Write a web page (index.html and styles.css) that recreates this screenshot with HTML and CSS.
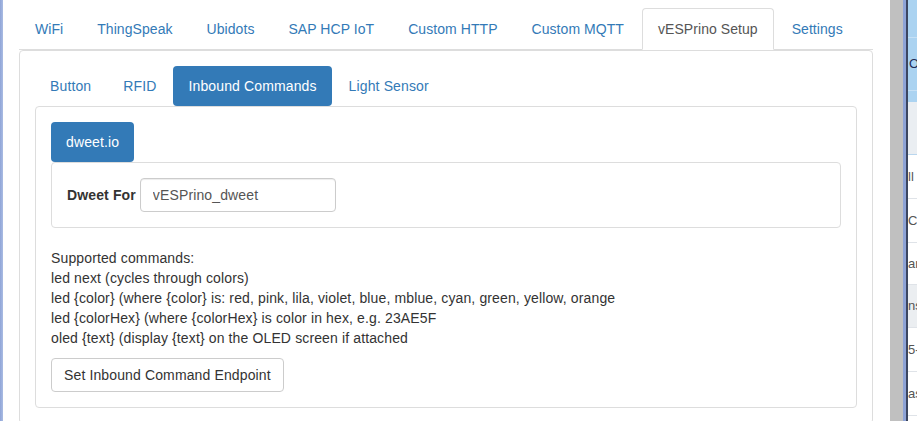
FILE: index.html
```html
<!DOCTYPE html>
<html>
<head>
<meta charset="utf-8">
<link rel="stylesheet" href="styles.css">
</head>
<body>
<div class="screen">
  <div class="edge-left"></div>
  <div class="main">
    <ul class="nav-tabs">
      <li><a>WiFi</a></li>
      <li><a>ThingSpeak</a></li>
      <li><a>Ubidots</a></li>
      <li><a>SAP HCP IoT</a></li>
      <li><a>Custom HTTP</a></li>
      <li><a>Custom MQTT</a></li>
      <li class="active"><a>vESPrino Setup</a></li>
      <li><a>Settings</a></li>
    </ul>
    <div class="tab-panel">
      <ul class="nav-pills">
        <li><a>Button</a></li>
        <li><a>RFID</a></li>
        <li class="active"><a>Inbound Commands</a></li>
        <li><a>Light Sensor</a></li>
      </ul>
      <div class="inner-panel">
        <ul class="nav-pills">
          <li class="active"><a>dweet.io</a></li>
        </ul>
        <div class="field-box">
          <label class="field-label">Dweet For</label>
          <input class="form-control" type="text" value="vESPrino_dweet">
        </div>
        <div class="help">
          <div>Supported commands:</div>
          <div>led next (cycles through colors)</div>
          <div>led {color} (where {color} is: red, pink, lila, violet, blue, mblue, cyan, green, yellow, orange</div>
          <div>led {colorHex} (where {colorHex} is color in hex, e.g. 23AE5F</div>
          <div>oled {text} (display {text} on the OLED screen if attached</div>
        </div>
        <button class="btn">Set Inbound Command Endpoint</button>
      </div>
    </div>
  </div>
  <div class="divider"></div>
  <div class="win-border"></div>
  <div class="win-dark"></div>
  <div class="side-table">
    <div class="st-head1"></div>
    <div class="st-head2"><span class="st-o">O</span></div>
    <div class="st-head3"></div>
    <div class="st-sub"></div>
    <div class="st-row">ll</div>
    <div class="st-row">C</div>
    <div class="st-row short">ar</div>
    <div class="st-row alt">ns</div>
    <div class="st-row">5-</div>
    <div class="st-row">as</div>
    <div class="st-row"></div>
  </div>
</div>
</body>
</html>
```

FILE: styles.css
```css
* { box-sizing: border-box; }
html, body { margin: 0; padding: 0; background: #fff; }
body {
  font-family: "Liberation Sans", Arial, sans-serif;
  font-size: 14px;
  line-height: 20px;
  letter-spacing: 0.13px;
  color: #333;
}
.screen {
  display: flex;
  width: 917px;
  height: 421px;
  overflow: hidden;
}
.edge-left {
  width: 3px;
  flex: none;
  background: linear-gradient(to right, #8fa5d8, #aabce3);
}
.main {
  width: 887px;
  flex: none;
  padding: 8px 17px 0 16px;
}
ul { list-style: none; margin: 0; padding: 0; }
a { text-decoration: none; cursor: pointer; }

.nav-tabs {
  display: flex;
  border-bottom: 1px solid #ddd;
  letter-spacing: 0.06px;
}
.nav-tabs li {
  margin-right: 2px;
  margin-bottom: -1px;
}
.nav-tabs a {
  display: block;
  padding: 10px 15px;
  border: 1px solid transparent;
  border-radius: 4px 4px 0 0;
  color: #337ab7;
  line-height: 20px;
}
.nav-tabs .active a {
  color: #555;
  background: #fff;
  border-color: #ddd;
  border-bottom-color: transparent;
}

.tab-panel {
  border: 1px solid #ddd;
  border-radius: 4px;
  padding: 15px;
}
.nav-pills {
  display: flex;
}
.nav-pills li { margin-right: 2px; }
.nav-pills a {
  display: block;
  padding: 10px 15px;
  border-radius: 4px;
  color: #337ab7;
  line-height: 20px;
}
.nav-pills .active a {
  background: #337ab7;
  color: #fff;
}

.inner-panel {
  border: 1px solid #ddd;
  border-radius: 4px;
  padding: 15px;
}
.field-box {
  display: flex;
  align-items: center;
  gap: 4px;
  border: 1px solid #ddd;
  border-radius: 4px;
  padding: 15px;
  margin-bottom: 20px;
}
.field-label {
  font-weight: bold;
}
.form-control {
  width: 196px;
  height: 34px;
  padding: 6px 12px;
  border: 1px solid #ccc;
  border-radius: 4px;
  box-shadow: inset 0 1px 1px rgba(0,0,0,.075);
  font-family: inherit;
  font-size: 14px;
  line-height: 20px;
  letter-spacing: inherit;
  color: #555;
  background: #fff;
}
.help { margin-bottom: 10px; }
.btn {
  display: block;
  height: 34px;
  padding: 6px 12px;
  border: 1px solid #ccc;
  border-radius: 4px;
  background: #fff;
  color: #333;
  font-family: inherit;
  font-size: 14px;
  line-height: 20px;
  letter-spacing: inherit;
}

.divider {
  width: 13px;
  flex: none;
  background: #c0c0c0;
}
.win-border {
  width: 3px;
  flex: none;
  background: #8ea3d6;
}
.win-dark {
  width: 2px;
  flex: none;
  background: #3c4660;
}
.side-table {
  width: 9px;
  flex: none;
  display: flex;
  flex-direction: column;
  overflow: hidden;
  font-size: 13px;
  letter-spacing: 0;
  color: #555;
  white-space: nowrap;
}
.st-head1 { height: 38px; background: #abd3f1; border-bottom: 1px solid #c6e0f5; flex: none; }
.st-head2 { height: 53px; background: #abd3f1; border-bottom: 1px solid #c6e0f5; flex: none; display: flex; align-items: center; }
.st-o { color: #1d2b55; padding-left: 1px; }
.st-head3 { height: 11px; background: #abd3f1; flex: none; }
.st-sub { height: 53px; background: #eaeef2; border-bottom: 1px solid #b9d6ee; flex: none; }
.st-row {
  height: 44px;
  flex: none;
  border-bottom: 1px solid #dfe3e8;
  display: flex;
  align-items: center;
  padding-left: 0;
}
.st-row.short { height: 42px; }
.st-row.alt { height: 43px; background: #ebeef1; }
```
